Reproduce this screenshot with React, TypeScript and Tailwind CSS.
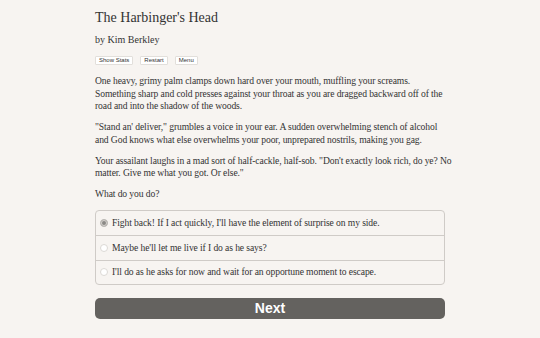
import React from "react";

const choices = [
  "Fight back! If I act quickly, I'll have the element of surprise on my side.",
  "Maybe he'll let me live if I do as he says?",
  "I'll do as he asks for now and wait for an opportune moment to escape.",
];

export default function App() {
  const selected = 0;

  return (
    <div className="min-h-screen bg-[#f7f4f1] text-[#333] font-['Liberation_Serif',serif]">
      <div className="mx-auto w-[350px] pt-[9px]">
        <h1 className="text-[14px] leading-[17px]">The Harbinger's Head</h1>
        <p className="mt-[7px] text-[10px] leading-[13px]">by Kim Berkley</p>

        <div className="mt-[10px] flex gap-[7px] font-['Liberation_Sans',sans-serif]">
          {["Show Stats", "Restart", "Menu"].map((label) => (
            <button
              key={label}
              className="h-[9px] rounded-[1px] border border-[#e2dfdb] bg-white px-[3px] text-[6px] leading-[7px] text-[#333]"
            >
              {label}
            </button>
          ))}
        </div>

        <div className="mt-[10px] space-y-[8px] whitespace-nowrap text-[9.6px] leading-[12.7px] tracking-[-0.1px]">
          <p>
            One heavy, grimy palm clamps down hard over your mouth, muffling your screams.
            <br />
            Something sharp and cold presses against your throat as you are dragged backward off of the
            <br />
            road and into the shadow of the woods.
          </p>
          <p>
            "Stand an' deliver," grumbles a voice in your ear. A sudden overwhelming stench of alcohol
            <br />
            and God knows what else overwhelms your poor, unprepared nostrils, making you gag.
          </p>
          <p>
            Your assailant laughs in a mad sort of half-cackle, half-sob. "Don't exactly look rich, do ye? No
            <br />
            matter. Give me what you got. Or else."
          </p>
          <p>What do you do?</p>
        </div>

        <div className="mt-[9px] rounded-[4px] border border-[#cfcbc7] text-[9.6px] tracking-[-0.1px]">
          {choices.map((text, i) => (
            <label
              key={text}
              className={`flex h-[24.5px] items-center gap-[4px] px-[4px] ${i > 0 ? "border-t border-[#cfcbc7]" : ""}`}
            >
              <span
                className={`h-[8px] w-[8px] shrink-0 rounded-full border ${
                  i === selected ? "border-[#bdbab6] bg-[#8b8986] ring-1 ring-inset ring-[#d6d3cf]" : "border-[#dcd9d5] bg-white"
                }`}
              />
              <span>{text}</span>
            </label>
          ))}
        </div>

        <button className="mt-[13px] flex h-[21px] w-full items-center justify-center rounded-[5px] bg-[#64625f] font-['Liberation_Sans',sans-serif] text-[14px] font-bold text-white">
          Next
        </button>
      </div>
    </div>
  );
}
